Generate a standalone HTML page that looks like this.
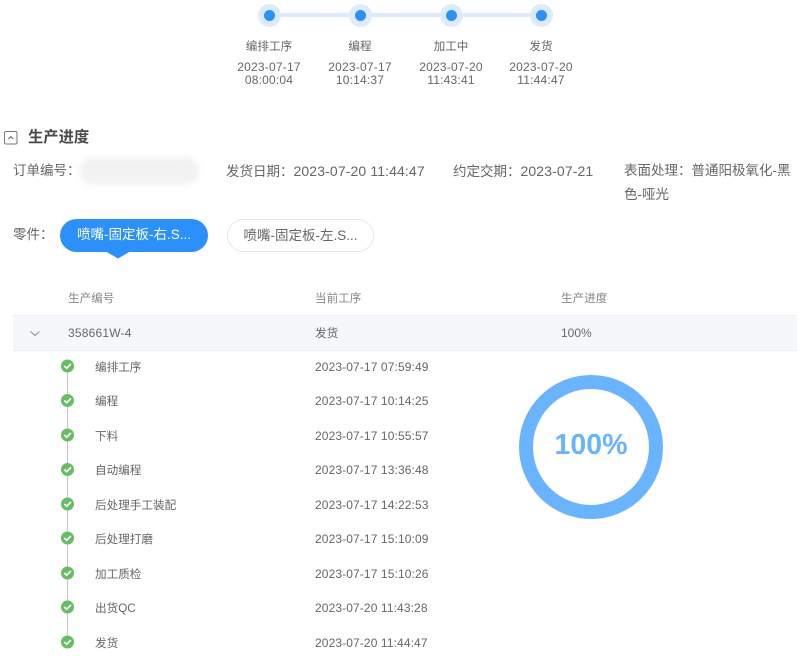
<!DOCTYPE html>
<html lang="zh"><head><meta charset="utf-8">
<style>
html,body{margin:0;padding:0;background:#fff}
body{width:800px;height:656px;position:relative;overflow:hidden;font-family:"Liberation Sans","Noto Sans CJK SC",sans-serif;color:#666;font-size:12px}
.a{position:absolute;white-space:nowrap;line-height:16px}
.c{transform:translateX(-50%);text-align:center;line-height:13px;letter-spacing:.2px}
.z{font-size:11.6px;letter-spacing:0;margin-top:1px}
.t{letter-spacing:.11px}
.dot{position:absolute;top:4px;width:23px;height:23px;border-radius:50%;background:#dcebfd;margin-left:-11.5px}
.dot:after{content:"";position:absolute;left:6px;top:6px;width:11px;height:11px;border-radius:50%;background:#2b90fb}
.i{font-size:13.5px;line-height:24px}
.i span{font-size:14px;letter-spacing:.12px}
.pill{position:absolute;top:219px;height:33px;border-radius:17px;box-sizing:border-box;text-align:center;line-height:32px;font-size:13.5px}
svg{position:absolute;overflow:visible}
</style></head><body>

<div class="a" style="left:269px;top:13px;width:272px;height:4px;background:#dcebfd"></div>
<div class="dot" style="left:269px"></div><div class="dot" style="left:360px"></div><div class="dot" style="left:451px"></div><div class="dot" style="left:541px"></div>

<div class="a c z" style="left:269px;top:39px">编排工序</div>
<div class="a c z" style="left:360px;top:39px">编程</div>
<div class="a c z" style="left:451px;top:39px">加工中</div>
<div class="a c z" style="left:541px;top:39px">发货</div>
<div class="a c" style="left:269px;top:61px">2023-07-17<br>08:00:04</div>
<div class="a c" style="left:360px;top:61px">2023-07-17<br>10:14:37</div>
<div class="a c" style="left:451px;top:61px">2023-07-20<br>11:43:41</div>
<div class="a c" style="left:541px;top:61px">2023-07-20<br>11:44:47</div>

<svg style="left:4px;top:131px" width="14" height="14" viewBox="0 0 14 14"><rect x=".5" y=".5" width="12.500" height="12.500" rx="1.500" fill="#fff" stroke="#777"/><path d="M4.300 8 6.800 5.600 9.300 8" fill="none" stroke="#666"/></svg>
<div class="a" style="left:28px;top:129px;font-size:15.3px;font-weight:bold;color:#4a4a4a;line-height:18px">生产进度</div>

<div class="a i" style="left:13px;top:159px">订单编号：</div>
<div class="a" style="left:79px;top:157px;width:120px;height:28px;border-radius:14px;background:#f2f2f2;filter:blur(3px)"></div>
<div class="a i" style="left:226px;top:159px">发货日期：<span>2023-07-20 11:44:47</span></div>
<div class="a i" style="left:453px;top:159px">约定交期：<span>2023-07-21</span></div>
<div class="a i" style="left:624px;top:159px">表面处理：普通阳极氧化-黑</div>
<div class="a i" style="left:624px;top:183px">色-哑光</div>

<div class="a i" style="left:13px;top:223px">零件：</div>
<div class="pill" style="left:60px;width:148px;background:#2b90fb;color:#fff">喷嘴-固定板-右.S...</div>
<svg style="left:105px;top:251px" width="26" height="8"><path d="M0 0H26L13 7.500Z" fill="#2b90fb"/></svg>
<div class="pill" style="left:227px;width:147px;background:#fff;border:1px solid #e4e7ed;color:#666;line-height:31px">喷嘴-固定板-左.S...</div>

<div class="a z" style="left:68px;top:290px;color:#888">生产编号</div>
<div class="a z" style="left:315px;top:290px;color:#888">当前工序</div>
<div class="a z" style="left:561px;top:290px;color:#888">生产进度</div>
<div class="a" style="left:13px;top:315px;width:784px;height:34px;background:#f5f7fa;border-top:1px solid #ebeef5;border-bottom:1px solid #ebeef5"></div>
<svg style="left:30px;top:331px" width="10" height="6"><path d="M.5.5 5 4.500 9.500.5" fill="none" stroke="#888"/></svg>
<div class="a" style="left:68px;top:325px;letter-spacing:.2px">358661W-4</div>
<div class="a z" style="left:315px;top:325px">发货</div>
<div class="a" style="left:561px;top:325px">100%</div>

<div class="a" style="left:67px;top:367px;width:1px;height:276px;background:#c6c6c6"></div>

<svg style="left:0;top:0" width="800" height="656">
<circle cx="67.500" cy="366" r="6.500" fill="#67bd63"/><path d="M64.300 366 66.700 368.200 70.900 364" fill="none" stroke="#fff" stroke-width="1.700"/>
<circle cx="67.500" cy="400.500" r="6.500" fill="#67bd63"/><path d="M64.300 400.500 66.700 402.700 70.900 398.500" fill="none" stroke="#fff" stroke-width="1.700"/>
<circle cx="67.500" cy="435" r="6.500" fill="#67bd63"/><path d="M64.300 435 66.700 437.200 70.900 433" fill="none" stroke="#fff" stroke-width="1.700"/>
<circle cx="67.500" cy="469.500" r="6.500" fill="#67bd63"/><path d="M64.300 469.500 66.700 471.700 70.900 467.500" fill="none" stroke="#fff" stroke-width="1.700"/>
<circle cx="67.500" cy="504" r="6.500" fill="#67bd63"/><path d="M64.300 504 66.700 506.200 70.900 502" fill="none" stroke="#fff" stroke-width="1.700"/>
<circle cx="67.500" cy="538" r="6.500" fill="#67bd63"/><path d="M64.300 538 66.700 540.200 70.900 536" fill="none" stroke="#fff" stroke-width="1.700"/>
<circle cx="67.500" cy="573" r="6.500" fill="#67bd63"/><path d="M64.300 573 66.700 575.200 70.900 571" fill="none" stroke="#fff" stroke-width="1.700"/>
<circle cx="67.500" cy="607" r="6.500" fill="#67bd63"/><path d="M64.300 607 66.700 609.200 70.900 605" fill="none" stroke="#fff" stroke-width="1.700"/>
<circle cx="67.500" cy="642" r="6.500" fill="#67bd63"/><path d="M64.300 642 66.700 644.200 70.900 640" fill="none" stroke="#fff" stroke-width="1.700"/>
<circle cx="591" cy="447" r="65" fill="none" stroke="#6ab4ff" stroke-width="14"/>
</svg>

<div class="a z" style="left:95px;top:359px">编排工序</div><div class="a t" style="left:315px;top:359px">2023-07-17 07:59:49</div>
<div class="a z" style="left:95px;top:393px">编程</div><div class="a t" style="left:315px;top:393px">2023-07-17 10:14:25</div>
<div class="a z" style="left:95px;top:428px">下料</div><div class="a t" style="left:315px;top:428px">2023-07-17 10:55:57</div>
<div class="a z" style="left:95px;top:462px">自动编程</div><div class="a t" style="left:315px;top:462px">2023-07-17 13:36:48</div>
<div class="a z" style="left:95px;top:497px">后处理手工装配</div><div class="a t" style="left:315px;top:497px">2023-07-17 14:22:53</div>
<div class="a z" style="left:95px;top:531px">后处理打磨</div><div class="a t" style="left:315px;top:531px">2023-07-17 15:10:09</div>
<div class="a z" style="left:95px;top:566px">加工质检</div><div class="a t" style="left:315px;top:566px">2023-07-17 15:10:26</div>
<div class="a z" style="left:95px;top:600px">出货QC</div><div class="a t" style="left:315px;top:600px">2023-07-20 11:43:28</div>
<div class="a z" style="left:95px;top:635px">发货</div><div class="a t" style="left:315px;top:635px">2023-07-20 11:44:47</div>

<div class="a" style="left:491px;width:200px;top:429px;line-height:32px;text-align:center;font-size:28.500px;font-weight:bold;color:#6ab4ff">100%</div>
</body></html>
